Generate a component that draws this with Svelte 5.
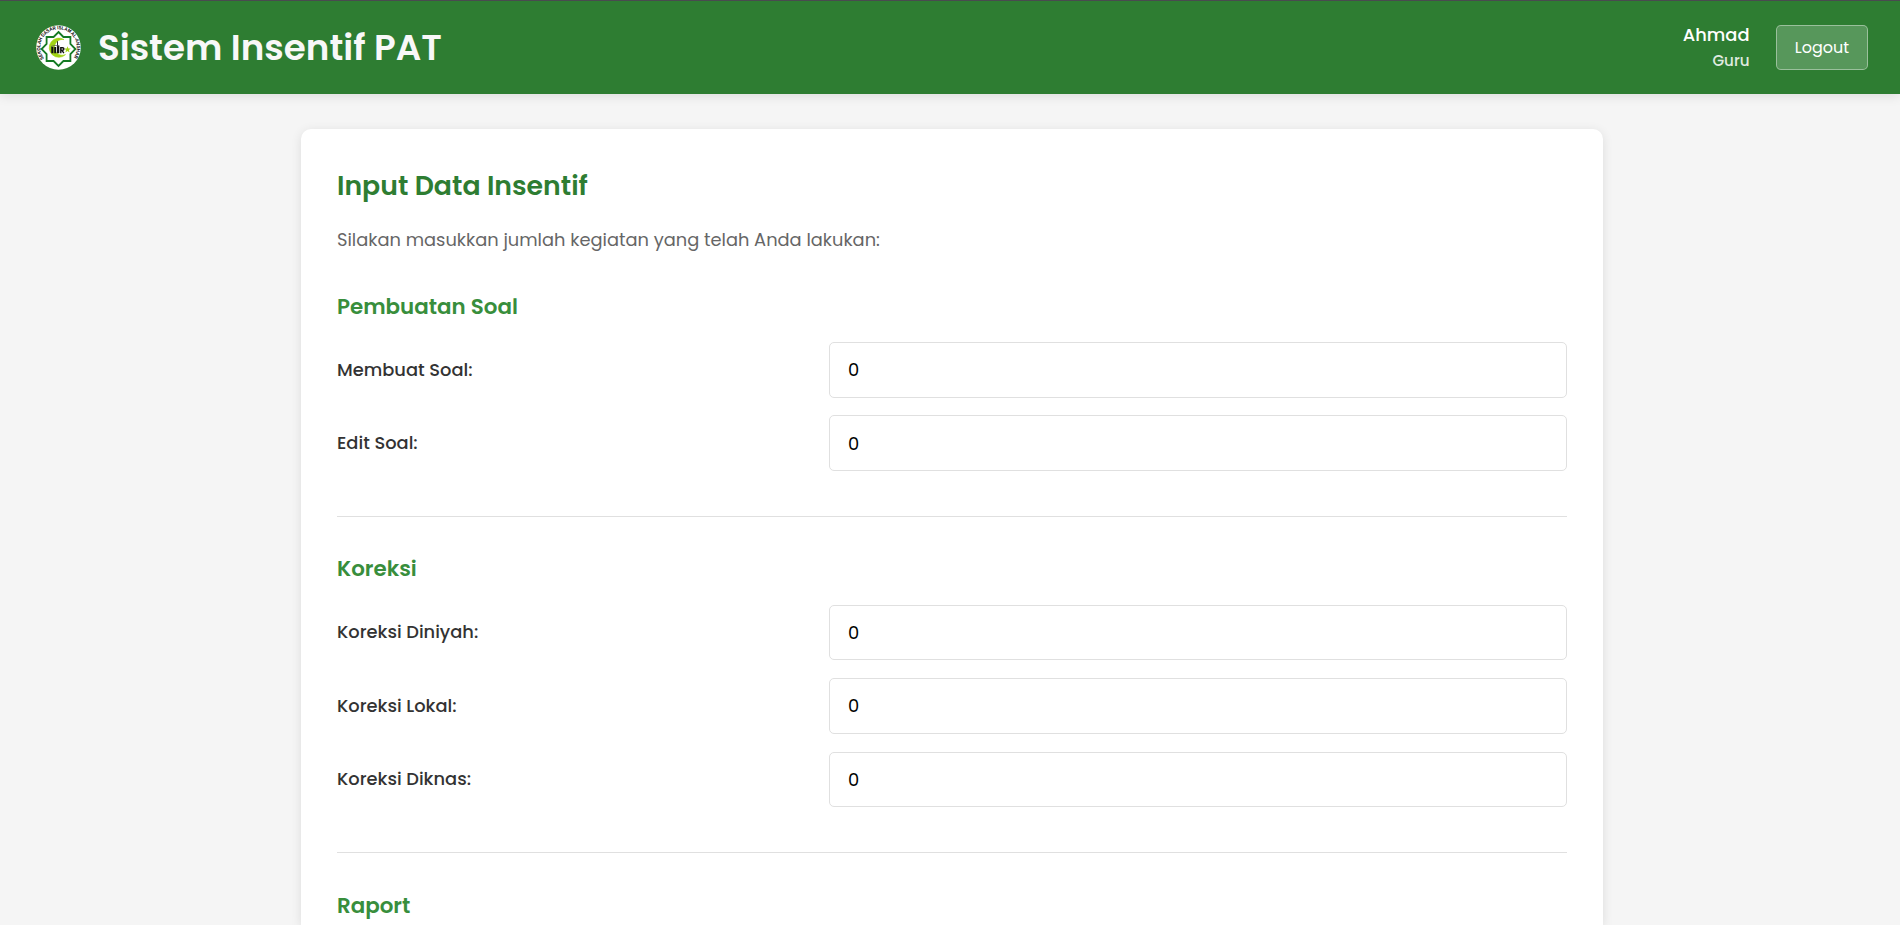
<script>
  let sections = $state([
    {
      title: 'Pembuatan Soal',
      fields: [
        { label: 'Membuat Soal:', value: '0' },
        { label: 'Edit Soal:', value: '0' }
      ]
    },
    {
      title: 'Koreksi',
      fields: [
        { label: 'Koreksi Diniyah:', value: '0' },
        { label: 'Koreksi Lokal:', value: '0' },
        { label: 'Koreksi Diknas:', value: '0' }
      ]
    },
    { title: 'Raport', fields: [] }
  ]);
</script>

<header>
  <div class="brand">
    <svg class="logo" viewBox="0 0 45 45" aria-hidden="true">
      <defs>
        <path id="ring" d="M8 33.5 A18.2 18.2 0 1 1 37 33.5" />
      </defs>
      <circle cx="22.5" cy="22.5" r="22.3" fill="#fff" />
      <path
        d="M22.5 5.6 L27.4 10.6 H34.4 V17.6 L39.4 22.6 L34.4 27.6 V34.6 H27.4 L22.5 39.6 L17.6 34.6 H10.6 V27.6 L5.6 22.6 L10.6 17.6 V10.6 H17.6 Z"
        transform="translate(0 1.4)" fill="#fff" stroke="#147a24" stroke-width="1.8" />
      <text class="ring-text"><textPath href="#ring" textLength="79" lengthAdjust="spacingAndGlyphs">SEKOLAH DASAR ISLAM AL-ANSHAR</textPath></text>
      <path d="M28 14.6 A9.6 9.6 0 1 0 29.5 29.6 A7.9 7.9 0 1 1 28 14.6Z" fill="#a1d313" stroke="#a1d313" stroke-width=".6" />
      <path d="M31.4 21.2l1 2.2 2.4.1-1.9 1.5.7 2.4-2.2-1.4-2 1.4.6-2.4-1.7-1.5 2.4-.1z" fill="#a1d313" />
      <path d="M15.3 28.3V22h2.1v6.3zM18.2 28.3V22h2v6.3zM21 28.3V16.2h.9v4.2h1.4v7.9z" fill="#111" />
      <path d="M24.8 28.3V22.7h1.8q1.3 0 1.3 1.3t-1.4 1.3h-1.7M25.9 25.4l2 2.8" fill="none" stroke="#111" stroke-width="1.4" />
      <path d="M15 21.5q4-2 8.3-.4" stroke="#555" stroke-width=".8" fill="none" />
    </svg>
    <h1>Sistem Insentif PAT</h1>
  </div>
  <div class="account">
    <div class="user">
      <span class="name">Ahmad</span>
      <span class="role">Guru</span>
    </div>
    <button type="button">Logout</button>
  </div>
</header>

<main>
  <h2>Input Data Insentif</h2>
  <p>Silakan masukkan jumlah kegiatan yang telah Anda lakukan:</p>
  {#each sections as section}
    <section>
      <h3>{section.title}</h3>
      {#each section.fields as field}
        <label>
          <span>{field.label}</span>
          <input type="text" inputmode="numeric" bind:value={field.value} />
        </label>
      {/each}
    </section>
  {/each}
</main>

<style>
  :global(body) {
    background: #f5f5f5;
    height: 925px;
    overflow: hidden;
    font-family: Poppins, Inter, sans-serif;
    font-size: 17.84px;
    color: #333;
  }
  header {
    box-sizing: border-box;
    height: 94px;
    padding: 0 32px 0 36px;
    border-top: 1px solid #494b4f;
    background: #2e7d32;
    color: #fff;
    display: flex;
    align-items: center;
    justify-content: space-between;
    box-shadow: 0 2px 11px rgba(0, 0, 0, 0.1);
  }
  .brand { display: flex; align-items: center; gap: 17px; }
  .logo { width: 45px; height: 45px; display: block; overflow: visible; }
  .ring-text { font: 700 5px "Liberation Sans", sans-serif; fill: #000; }
  h1 {
    margin: 0;
    font-size: 35.7px;
    font-weight: 600;
    line-height: 54px;
    color: #f8f8f8;
  }
  .account { display: flex; align-items: center; gap: 26.5px; }
  .user {
    display: flex;
    flex-direction: column;
    align-items: flex-end;
    padding-bottom: 2px;
  }
  .name { font-weight: 500; line-height: 28px; }
  .role { font-size: 15.1px; font-weight: 500; line-height: 23px; opacity: 0.85; }
  button {
    box-sizing: border-box;
    width: 92px;
    height: 45px;
    padding: 0;
    border: 1px solid rgba(255, 255, 255, 0.4);
    border-radius: 5px;
    background: rgba(255, 255, 255, 0.2);
    color: #fff;
    font: 400 16px Poppins, Inter, sans-serif;
  }
  main {
    box-sizing: border-box;
    width: 1302px;
    height: 796px;
    overflow: hidden;
    margin: 35px 0 0 301px;
    padding: 36px 36px 0;
    border-radius: 10px 10px 0 0;
    background: #fff;
    box-shadow: 0 2px 11px rgba(0, 0, 0, 0.1);
  }
  h2 {
    margin: 0;
    font-size: 26.75px;
    font-weight: 600;
    line-height: 42px;
    color: #2e7d32;
  }
  p { margin: 18px 0 0; line-height: 30px; color: #666; }
  section { padding-bottom: 9px; border-bottom: 1px solid #e0e0e0; }
  section + section { padding-top: 34.2px; }
  p + section { padding-top: 33.6px; }
  section:last-child { padding-top: 34.7px; padding-bottom: 0; border-bottom: 0; }
  h3 {
    margin: 0 0 18.2px;
    font-size: 21.4px;
    font-weight: 600;
    line-height: 35.2px;
    color: #388e3c;
  }
  label {
    display: grid;
    grid-template-columns: 492px 1fr;
    align-items: center;
    height: 55.6px;
    margin-bottom: 17.8px;
    font-weight: 500;
  }
  label:last-child { margin-bottom: 36.2px; }
  label span { padding-bottom: 1.2px; }
  input {
    box-sizing: border-box;
    width: 100%;
    height: 55.6px;
    padding: 0 18px;
    border: 1px solid #e0e0e0;
    border-radius: 5px;
    background: #fff;
    color: #000;
    font: 400 17.84px Poppins, Inter, sans-serif;
    outline: none;
  }
</style>
